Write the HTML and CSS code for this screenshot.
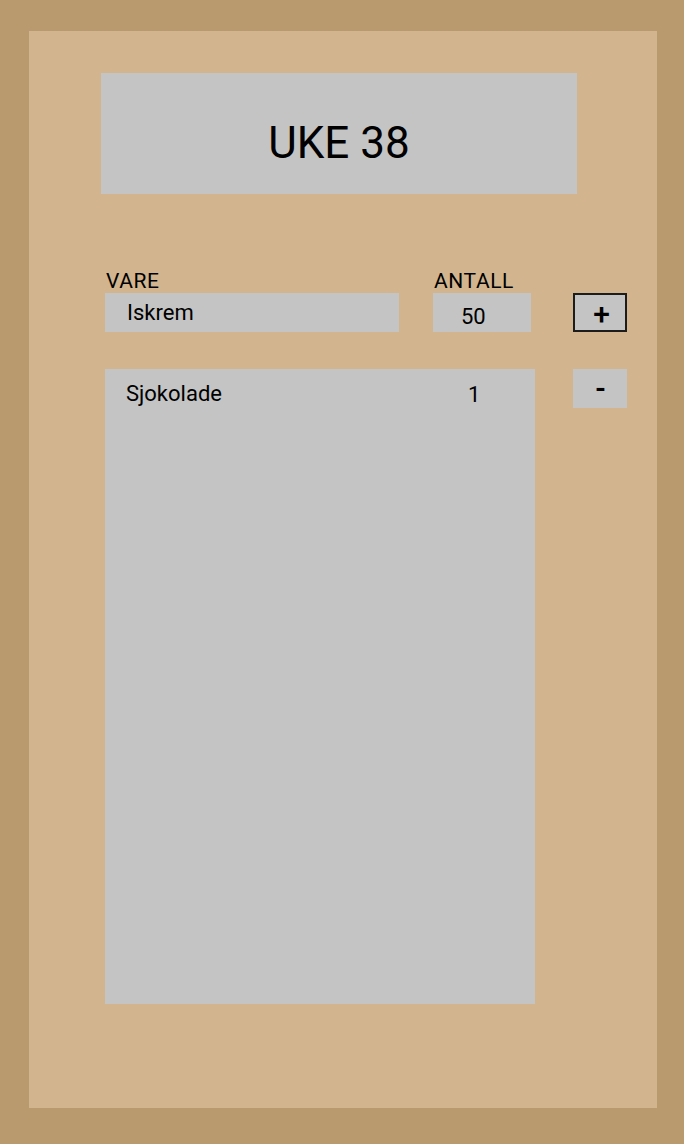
FILE: index.html
```html
<!DOCTYPE html>
<html lang="no">
<head>
<meta charset="utf-8">
<title>Uke 38</title>
<link rel="stylesheet" href="styles.css">
</head>
<body>
<div class="panel">
  <div class="header">UKE 38</div>
  <div class="form">
    <div class="label label-vare">VARE</div>
    <div class="label label-antall">ANTALL</div>
    <div class="field field-vare">Iskrem</div>
    <div class="field field-antall">50</div>
    <button class="btn btn-plus">+</button>
    <div class="list">
      <div class="item"><span class="item-name">Sjokolade</span><span class="item-qty">1</span></div>
    </div>
    <button class="btn btn-minus">-</button>
  </div>
</div>
</body>
</html>
```
FILE: styles.css
```css
html, body {
  margin: 0;
  padding: 0;
}
body {
  background: #b99a6f;
  font-family: Roboto, "Liberation Sans", sans-serif;
  color: #000;
  width: 684px;
  height: 1144px;
  overflow: hidden;
}
.panel {
  box-sizing: border-box;
  margin: 31px 27px 0 29px;
  height: 1077px;
  background: #d2b58e;
  padding: 42px 0 0 72px;
}
.header {
  box-sizing: border-box;
  width: 476px;
  height: 121px;
  background: #c4c4c4;
  text-align: center;
  font-size: 44px;
  line-height: 52px;
  padding-top: 44px;
}
.form {
  margin-top: 76px;
  margin-left: 4px;
  display: grid;
  grid-template-columns: 294px 34px 98px 4px 38px 54px;
  grid-template-rows: 23px 39px 37px 39px 596px;
}
.label {
  font-size: 21px;
  line-height: 23px;
  letter-spacing: 0.6px;
}
.label-vare { grid-column: 1; grid-row: 1; padding-left: 1px; }
.label-antall { grid-column: 3; grid-row: 1; padding-left: 1px; }
.field {
  background: #c4c4c4;
  font-size: 22px;
  box-sizing: border-box;
}
.field-vare {
  grid-column: 1;
  grid-row: 2;
  line-height: 39px;
  padding-left: 22px;
}
.field-antall {
  grid-column: 3;
  grid-row: 2;
  line-height: 30px;
  padding: 9px 0 0 28px;
}
.btn {
  margin: 0;
  padding: 0;
  box-sizing: border-box;
  background: #c4c4c4;
  font-family: Roboto, "Liberation Sans", sans-serif;
  font-weight: 700;
  color: #000;
  font-size: 28px;
  line-height: 1;
  display: flex;
  align-items: center;
  justify-content: center;
}
.btn-plus {
  grid-column: 6;
  grid-row: 2;
  border: 2px solid #1c1c1c;
  padding: 3px 0 0 3px;
  font-weight: 500;
  font-size: 30px;
}
.btn-minus {
  grid-column: 6;
  grid-row: 4;
  border: none;
  padding: 0 0 0 1px;
}
.list {
  grid-column: 1 / 5;
  grid-row: 4 / 6;
  background: #c4c4c4;
  padding-top: 12px;
}
.item {
  display: flex;
  font-size: 22px;
  line-height: 25px;
}
.item-name {
  flex: 0 0 342px;
  padding-left: 21px;
}
.item-qty {
  flex: 0 0 auto;
  padding-top: 1px;
}
```
